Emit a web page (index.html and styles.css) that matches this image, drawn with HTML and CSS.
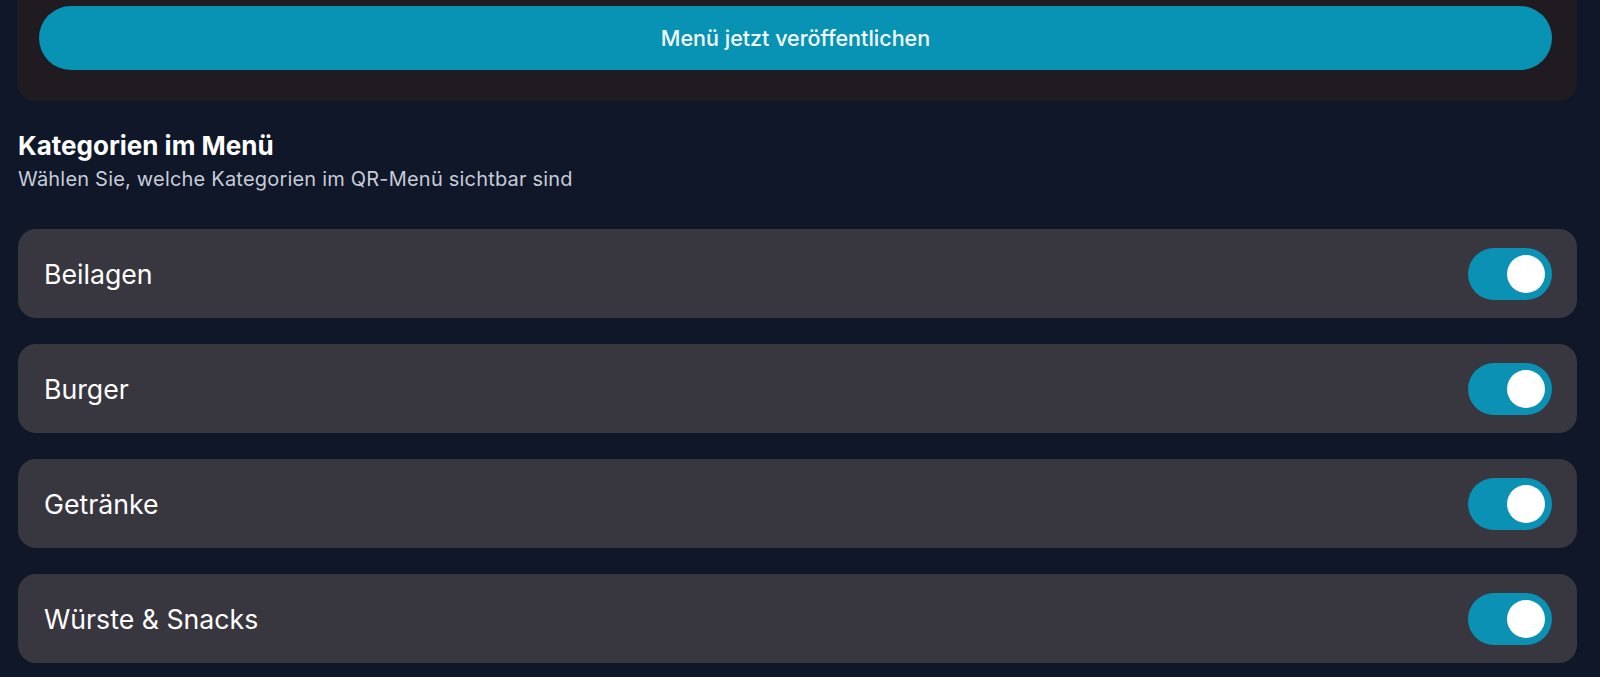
FILE: index.html
```html
<!DOCTYPE html>
<html lang="de">
<head>
<meta charset="utf-8">
<title>Kategorien im Menü</title>
<link rel="stylesheet" href="styles.css">
</head>
<body>
<main class="page">
  <section class="publish-card">
    <button class="publish-btn" type="button">Menü jetzt veröffentlichen</button>
  </section>

  <header class="section-head">
    <h2 class="section-title">Kategorien im Menü</h2>
    <p class="section-sub">Wählen Sie, welche Kategorien im QR-Menü sichtbar sind</p>
  </header>

  <ul class="cat-list">
    <li class="cat-row"><span class="cat-name">Beilagen</span><span class="toggle on"><span class="knob"></span></span></li>
    <li class="cat-row"><span class="cat-name">Burger</span><span class="toggle on"><span class="knob"></span></span></li>
    <li class="cat-row"><span class="cat-name">Getränke</span><span class="toggle on"><span class="knob"></span></span></li>
    <li class="cat-row"><span class="cat-name">Würste &amp; Snacks</span><span class="toggle on"><span class="knob"></span></span></li>
  </ul>
</main>
</body>
</html>
```

FILE: styles.css
```css
* { box-sizing: border-box; }

html, body {
  margin: 0;
  padding: 0;
  background: #0f1729;
  overflow: hidden;
}

body {
  font-family: Inter, "Noto Sans", "DejaVu Sans", sans-serif;
  color: #ffffff;
}

.page {
  padding: 0 23px 0 17px;
  display: flex;
  flex-direction: column;
}

.publish-card {
  margin-top: -25px;
  background: #1f1b21;
  border-radius: 18px;
  padding: 31px 25px 31px 22px;
}

.publish-btn {
  display: block;
  width: 100%;
  height: 64px;
  border: none;
  border-radius: 32px;
  background: #0893b5;
  color: #f4fbfd;
  font-family: inherit;
  font-size: 21.5px;
  font-weight: 500;
  cursor: pointer;
}

.section-head {
  margin-top: 30px;
  padding-left: 1px;
  display: flex;
  flex-direction: column;
  gap: 6px;
}

.section-title {
  margin: 0;
  font-size: 26px;
  font-weight: 700;
  line-height: 30px;
  color: #ffffff;
}

.section-sub {
  margin: 0;
  font-size: 20px;
  letter-spacing: 0.2px;
  line-height: 24px;
  color: #c7cbd7;
}

.cat-list {
  list-style: none;
  margin: 38px 0 0 1px;
  padding: 0;
  display: flex;
  flex-direction: column;
  gap: 26px;
}

.cat-row {
  height: 89px;
  background: #38363e;
  border-radius: 18px;
  display: flex;
  align-items: center;
  justify-content: space-between;
  padding: 0 25px 0 26px;
}

.cat-name {
  font-size: 26.7px;
  font-weight: 400;
  color: #ffffff;
}

.toggle {
  width: 84px;
  height: 52px;
  border-radius: 26px;
  background: #0a91b3;
  display: flex;
  align-items: center;
  justify-content: flex-end;
  padding: 0 7px;
}

.knob {
  width: 38px;
  height: 38px;
  border-radius: 50%;
  background: #ffffff;
}
```
